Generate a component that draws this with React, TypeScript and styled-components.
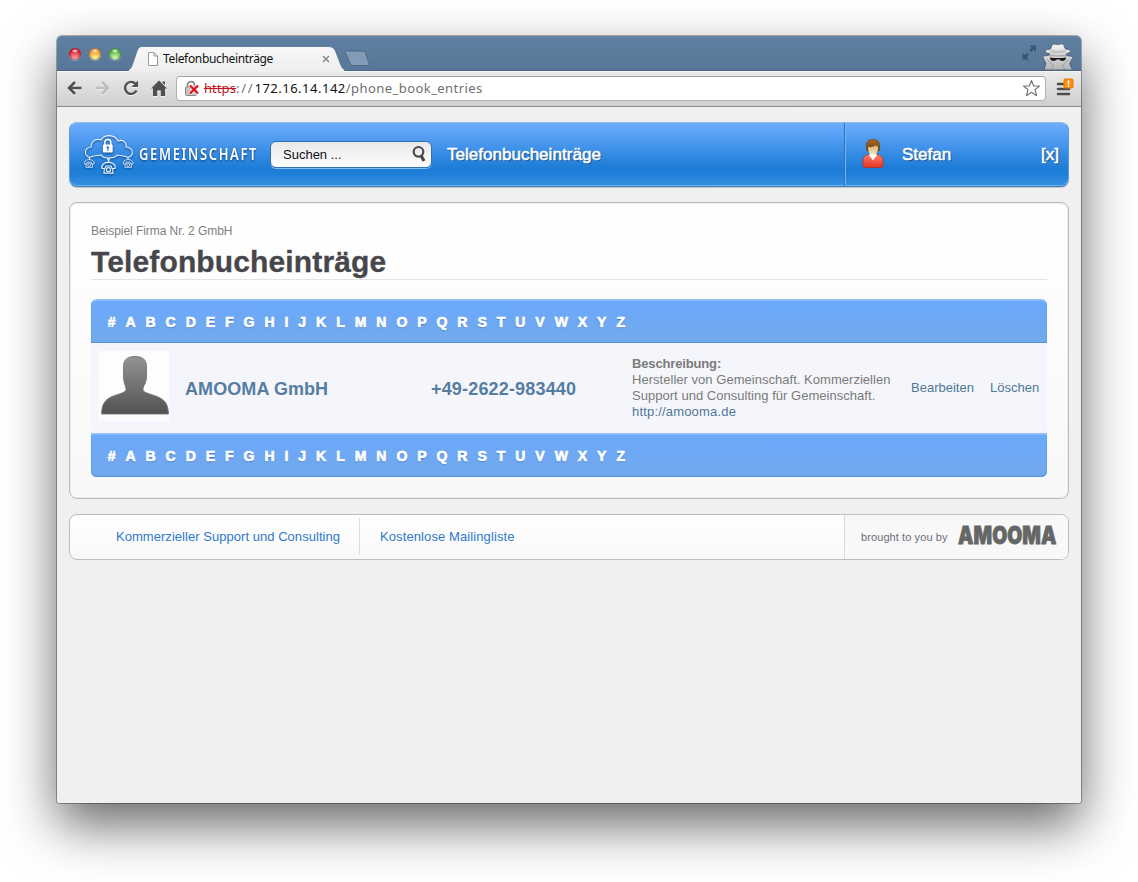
import React from 'react';
import styled, { createGlobalStyle } from 'styled-components';

const Global = createGlobalStyle`
  * { box-sizing: border-box; }
  html, body { margin: 0; height: 882px; overflow: hidden; background: #fff; }
  body { font-family: "Liberation Sans", Arial, sans-serif; }
  svg { flex-shrink: 0; }
`;

const Desktop = styled.div`
  width: 1138px;
  height: 882px;
  padding: 36px 57px 79px 57px;
  overflow: hidden;
`;

const Window = styled.div`
  width: 1024px;
  height: 767px;
  display: flex;
  flex-direction: column;
  border-radius: 5px 5px 3px 3px;
  box-shadow: 0 0 0 1px rgba(0, 0, 0, 0.3), 0 22px 52px 0 rgba(0, 0, 0, 0.6);
`;

const TabStrip = styled.div`
  height: 35px;
  display: flex;
  align-items: flex-end;
  background: linear-gradient(#5f80a3, #587798);
  border-radius: 5px 5px 0 0;
  box-shadow: inset 0 1px 0 #6685a6;
  border-bottom: 1px solid #4b6783;
`;

const Lights = styled.div`
  display: flex;
  gap: 8px;
  padding: 0 0 10px 12px;
  width: 74px;
`;

const Light = styled.span<{ $a: string; $b: string }>`
  width: 12px;
  height: 12px;
  border-radius: 50%;
  background:
    radial-gradient(ellipse 3.5px 2px at 50% 24%, rgba(255, 255, 255, 0.95), rgba(255, 255, 255, 0)),
    radial-gradient(circle at 50% 88%, ${p => p.$a} 12%, ${p => p.$b} 65%);
  box-shadow: inset 0 0 1.5px rgba(40, 20, 20, 0.85), 0 1px 1px rgba(255, 255, 255, 0.3);
`;

const Tab = styled.div`
  position: relative;
  width: 220px;
  height: 25px;
  margin-bottom: -1px;
  display: flex;
  align-items: center;
  padding: 0 21px 0 16px;
  > svg { position: relative; }
  > svg.shape { position: absolute; left: 0; top: 0; overflow: visible; }
`;

const TabLabel = styled.span`
  position: relative;
  flex: 1;
  margin-left: 4px;
  font: 12px/16px "Noto Sans", sans-serif;
  letter-spacing: -0.34px;
  color: #111;
  white-space: nowrap;
`;

const TabEnd = styled.div`
  flex: 1;
  display: flex;
  justify-content: space-between;
  align-items: flex-end;
`;

const NewTab = styled.svg`
  margin-left: -8px;
`;

const Corner = styled.div`
  display: flex;
  align-items: flex-end;
  gap: 4px;
  padding-right: 7px;
`;

const Expand = styled.svg`
  margin-bottom: 8px;
`;

const Toolbar = styled.div`
  height: 36px;
  display: flex;
  align-items: center;
  padding: 0 7px 1px 9px;
  background: linear-gradient(#ebebeb, #cfcfcf);
  box-shadow: inset 0 1px 0 #f6f6f6;
  border-bottom: 1px solid #8b8b8b;
`;

const Nav = styled.div`
  display: flex;
  gap: 10px;
  width: 110px;
  svg { display: block; filter: drop-shadow(0 1px 0 rgba(255, 255, 255, 0.7)); }
`;

const Omnibox = styled.div`
  width: 871px;
  height: 25px;
  display: flex;
  align-items: center;
  padding: 0 4px 0 7px;
  background: #fff;
  border: 1px solid #b1b1b1;
  border-top-color: #a5a5a5;
  border-radius: 4px;
  margin-right: 10px;
`;

const Url = styled.div`
  flex: 1;
  display: flex;
  margin-left: 4px;
  font: 13px/18px "Noto Sans", sans-serif;
  color: #6f6f6f;
  white-space: nowrap;
`;

const UrlPart = styled.span<{ $color?: string; $strike?: boolean; $space: number }>`
  color: ${p => p.$color || 'inherit'};
  letter-spacing: ${p => p.$space}px;
  text-decoration: ${p => (p.$strike ? 'line-through' : 'none')};
`;

const Page = styled.main`
  flex: 1;
  padding: 15px 12px;
  display: flex;
  flex-direction: column;
  gap: 15px;
  border-radius: 0 0 3px 3px;
  background:
    repeating-linear-gradient(135deg, rgba(225, 230, 228, 0) 0 4.66px, rgba(222, 228, 226, 0.28) 4.66px 5.66px),
    #f1f1f1;
`;

const Header = styled.header`
  height: 65px;
  display: flex;
  align-items: stretch;
  border-radius: 8px;
  border: 1px solid #5b9ee0;
  border-top-color: #8fbcea;
  border-bottom-color: #3b7fc0;
  background: linear-gradient(#6eadfe 0%, #4b98ee 30%, #1c7cd6 72%, #1f80d9 82%, #3790e0 100%);
  box-shadow: inset 0 -1px 0 #6db1ee, 0 1px 1px rgba(0, 0, 0, 0.18);
  color: #fff;
`;

const HeaderMain = styled.div`
  flex: 1;
  display: flex;
  align-items: center;
  padding-left: 14px;
`;

const Brand = styled.div`
  width: 186px;
  display: flex;
  align-items: center;
  filter: drop-shadow(0 1px 1px rgba(0, 40, 90, 0.75));
`;

const BrandName = styled.span`
  margin: -2px 0 0 5px;
  font: 600 16.5px/20px "Noto Sans", sans-serif;
  letter-spacing: 2.15px;
  white-space: nowrap;
  transform: scaleX(0.783);
  transform-origin: left;
`;

const Search = styled.div`
  width: 162px;
  height: 27px;
  margin-top: -1px;
  display: flex;
  align-items: center;
  justify-content: space-between;
  padding: 0 4px 0 12px;
  border-radius: 6px;
  border: 1px solid #3071b5;
  background: linear-gradient(#e9e9eb, #fdfdfd);
  box-shadow: 0 1px 0 rgba(160, 205, 250, 0.8);
  font-size: 13px;
  color: #111;
`;

const HeaderText = styled.span`
  font-size: 17px;
  line-height: 20px;
  -webkit-text-stroke: 0.55px #fff;
  text-shadow: 1px 1px 1px rgba(0, 20, 60, 0.6);
`;

const HeaderTitle = styled(HeaderText)`
  margin-left: 15px;
  letter-spacing: 0.04px;
`;

const UserPanel = styled.div`
  width: 223px;
  display: flex;
  align-items: center;
  padding: 0 9px 0 16px;
  border-left: 1px solid #74b2f0;
  box-shadow: -1px 0 0 #2b74c0;
`;

const UserIcon = styled.svg`
  margin: -1px 0 0 -1px;
`;

const UserName = styled(HeaderText)`
  flex: 1;
  margin-left: 17px;
`;

const Card = styled.section`
  height: 297px;
  padding: 20px 21px 0 21px;
  border: 1px solid #bcbcc7;
  border-radius: 8px;
  background: linear-gradient(#fff, #f8f8f8);
  box-shadow: inset 0 0 0 1px #ececf0;
`;

const Company = styled.div`
  font-size: 12px;
  line-height: 16px;
  letter-spacing: -0.05px;
  color: #7e7e82;
`;

const Title = styled.h1`
  margin: 0 0 19px;
  height: 41px;
  padding-top: 5px;
  border-bottom: 1px solid #e3e3e6;
  font-size: 30px;
  line-height: 36px;
  letter-spacing: 0.13px;
  font-weight: bold;
  color: #47474b;
  -webkit-text-stroke: 0.3px #47474b;
`;

const LetterBar = styled.nav<{ $last?: boolean }>`
  height: 44px;
  display: flex;
  align-items: center;
  gap: 9.96px;
  padding: 1px 17px 0 16.7px;
  border-radius: ${p => (p.$last ? '0 0 6px 6px' : '6px 6px 0 0')};
  background: linear-gradient(#6aa9fc, #73a8eb);
  border-top: 1px solid #96c2f4;
  box-shadow: inset 0 1px 0 #8abbf8, inset 0 -1px 0 #5391d4, inset 1px 0 0 #61a0ea, inset -1px 0 0 #61a0ea;
  font-size: 14px;
  font-weight: bold;
  color: #fff;
  -webkit-text-stroke: 0.7px #fff;
  text-shadow: 0 1px 1px rgba(20, 70, 140, 0.6);
`;

const Entry = styled.div`
  height: 90px;
  display: grid;
  grid-template-columns: 94px 246px 201px 279px 79px 1fr;
  align-items: center;
  background: #f5f6fb;
  font-size: 13px;
  line-height: 16px;
  color: #7a7a7a;
`;

const Avatar = styled.div`
  width: 70px;
  height: 70px;
  margin-left: 8px;
  margin-top: -4px;
  background: #fdfdfd;
`;

const Strong = styled.span<{ $space: number }>`
  padding-top: 1px;
  font-size: 18px;
  line-height: 22px;
  font-weight: bold;
  letter-spacing: ${p => p.$space}px;
  color: #557da3;
`;

const Description = styled.div`
  padding-bottom: 1px;
  letter-spacing: 0.03px;
  white-space: nowrap;
`;

const Heading = styled.b`
  letter-spacing: -0.15px;
`;

const Link = styled.a`
  color: #507697;
`;

const Website = styled(Link)`
  letter-spacing: 0.18px;
`;

const Footer = styled.footer`
  height: 46px;
  display: flex;
  align-items: stretch;
  border: 1px solid #bcbcc7;
  border-radius: 8px;
  background: linear-gradient(#fff, #f8f8f8);
`;

const FooterLinks = styled.div`
  flex: 1;
  display: flex;
  padding: 3px 0 4px 46px;
`;

const FooterLink = styled.a`
  display: flex;
  align-items: center;
  padding-right: 20px;
  margin-right: 20px;
  font-size: 13px;
  letter-spacing: 0.04px;
  color: #2f79cc;
  & + & { padding: 0; letter-spacing: 0.1px; }
  &:first-child { padding-right: 19px; border-right: 1px solid #dddde0; }
`;

const Sponsor = styled.div`
  width: 224px;
  display: flex;
  align-items: center;
  padding-left: 16px;
  border-left: 1px solid #dadade;
  border-radius: 0 7px 7px 0;
  background: #f8f8f8;
  font-size: 11px;
  letter-spacing: 0.09px;
  color: #6d6d7c;
  svg { margin-left: 9px; overflow: visible; }
`;

const Phone = ({ x, y, s }: { x: number; y: number; s: number }) => (
  <g transform={`translate(${x} ${y}) scale(${s})`} fill="none" stroke="#e6f2ff" strokeWidth="1.1">
    <path d="M-6.500 0C-7.500 -4.500 -3 -6 0 -6S7.500 -4.500 6.500 0L3.500 0 2.500 -2.500H-2.500L-3.500 0Z" />
    <path d="M-4 0L-4.500 4.500H4.500L4 0" />
    <circle cx="0" cy="1.200" r="2" />
  </g>
);

const CloudLogo = () => (
  <svg width="50" height="42" viewBox="0 0 50 42">
    <path d="M5.500 23.500C-1 20.500 1 13.500 7 13C7 6.500 13 4 17 6C20 0 31 0 34 7C39 5 43 8.500 42 13C49.500 13.500 50.500 21 44 23.500M5.500 23.500C10 21 14 22 17 21C19 24 22 24 24.500 24C27 24 31 24 33 21C36 22 40 21 44 23.500M5.500 23.500V26M44 23.500V26M23.500 24L24.500 28L25.500 24" fill="none" stroke="#e6f2ff" strokeWidth="1.1" />
    <path d="M20.800 11.500V9C20.800 4.300 26.800 4.300 26.800 9V11.500" fill="none" stroke="#fff" strokeWidth="1.6" />
    <rect x="18.900" y="10.500" width="9.800" height="8" rx="1" fill="#fff" />
    <path d="M23.800 12V17M22.500 13.500H25.200" stroke="#3e8adc" strokeWidth="1.3" />
    <Phone x={5.2} y={30} s={0.74} />
    <Phone x={44.200} y={30} s={0.74} />
    <Phone x={24.500} y={34.500} s={1.02} />
  </svg>
);

const LETTERS = '#ABCDEFGHIJKLMNOPQRSTUVWXYZ'.split('');

const Letters = ({ last }: { last?: boolean }) => (
  <LetterBar $last={last}>
    {LETTERS.map(l => <span key={l}>{l}</span>)}
  </LetterBar>
);

export default function App() {
  return (
    <Desktop>
      <Global />
      <Window>
        <TabStrip>
          <Lights>
            <Light $a="#ff9a9a" $b="#dc1c30" />
            <Light $a="#ffef8a" $b="#ea9a2c" />
            <Light $a="#c8f8a0" $b="#55b048" />
          </Lights>
          <Tab>
            <svg className="shape" width="220" height="25" viewBox="0 0 220 25">
              <defs>
                <linearGradient id="tab" x1="0" y1="0" x2="0" y2="1">
                  <stop offset="0" stopColor="#f8f8f8" />
                  <stop offset="1" stopColor="#eeeeee" />
                </linearGradient>
              </defs>
              <path d="M-6 24.500C0 24 0 22 2 17L6 5C7.500 1.500 9 0.500 12 0.500H197C201 0.500 203 2 204.500 5L209 17C211 22 212 24 217 24.500Z" fill="url(#tab)" stroke="#4e6b89" strokeWidth="0.7" />
              <rect x="-2" y="24" width="215" height="2" fill="#eeeeee" />
            </svg>
            <svg width="12" height="14" viewBox="0 0 12 14">
              <path d="M1.500 0.500H7L10.500 4V13.500H1.500ZM7 0.500V4H10.500" fill="#fff" stroke="#999" />
            </svg>
            <TabLabel>Telefonbucheinträge</TabLabel>
            <svg width="8" height="8" viewBox="0 0 8 8">
              <path d="M1 1L7 7M7 1L1 7" stroke="#888" strokeWidth="1.5" />
            </svg>
          </Tab>
          <TabEnd>
            <NewTab width="28" height="24" viewBox="0 0 28 24">
              <path d="M3.500 5H19C21 5 22 6 22.500 7.500L26 17C26.500 19 26 19.500 24.500 19.500H11C8.500 19.500 7.500 18.500 7 17L2.500 7C2 5.500 2.500 5 3.500 5Z" fill="#829bb6" stroke="#4c6987" />
            </NewTab>
            <Corner>
              <Expand width="16" height="18" viewBox="0 0 16 18">
                <path d="M7.500 1.500H14V8L11.700 5.800 9.200 8 7 6 9.700 3.800ZM0.500 9L2.800 11.200 5 9 7 11 4.800 13.200 7 15.500H0.500Z" fill="#3d5670" />
              </Expand>
              <svg width="32" height="27" viewBox="0 0 32 27">
                <defs>
                  <linearGradient id="coat" x1="0" y1="0" x2="0" y2="1"><stop offset="0" stopColor="#f4f4f4" /><stop offset="1" stopColor="#b4b4b4" /></linearGradient>
                </defs>
                <path d="M2 27L4 20.500 0.500 13.500C4 12 6 13 7.500 12V10.500C5 10.500 3 9.500 3 8C4 6 7 6.500 8.500 6L10 2C12 0 14 1.500 16 1.500S20 0 21.500 1.500L23.500 6C27 6.500 29 7 28.500 9L24 11V12.500L31.500 13.500 27.500 20.500 30.500 27Z" fill="url(#coat)" stroke="#45566a" strokeWidth="0.8" />
                <path d="M9 6.500C13 8 20 8 23.500 6.500L24 9C19 11 13 11 8 9Z" fill="#c4c4c4" />
                <path d="M7.500 11C12 12.500 20 12.500 24.500 11V13.500H7.500Z" fill="#aaa" />
                <path d="M8 14.500C12 15.300 20 15.300 24 14.500C24.500 18 19 19 17.300 16.500H14.700C13 19 7.500 18 8 14.500Z" fill="#1c1c1c" />
                <path d="M5 16L11.500 23 9 26M27 16L20.500 23 23 26" stroke="#999" fill="none" />
              </svg>
            </Corner>
          </TabEnd>
        </TabStrip>
        <Toolbar>
          <Nav>
            <svg width="18" height="18" viewBox="0 0 18 18"><path d="M15.500 9H3.500M9 3L3 9L9 15" fill="none" stroke="#505050" strokeWidth="2.5" /></svg>
            <svg width="18" height="18" viewBox="0 0 18 18"><path d="M2 9H13.500M8 3L14 9L8 15" fill="none" stroke="#bdbdbd" strokeWidth="2.5" /></svg>
            <svg width="18" height="18" viewBox="0 0 18 18"><path d="M14.500 11.500A6 6 0 1 1 13.500 4.800" fill="none" stroke="#505050" strokeWidth="2.400" /><path d="M16 1.500V8H9.500Z" fill="#505050" /></svg>
            <svg width="18" height="18" viewBox="0 0 18 18"><path d="M9 1.500L17 9.500H15V17H10.800V11.500H7.200V17H3V9.500H1ZM12.500 2.500H15V6L12.500 4Z" fill="#505050" /></svg>
          </Nav>
          <Omnibox>
            <svg width="16" height="17" viewBox="0 0 16 17">
              <path d="M3.500 8V5C3.500 0.500 10.500 0.500 10.500 5V8" fill="none" stroke="#8a8a8a" strokeWidth="1.600" />
              <rect x="1.500" y="7" width="11" height="8.500" rx="1" fill="#c4c4c4" stroke="#8a8a8a" />
              <path d="M6 5.500L14 13.500M14 5.500L6 13.500" stroke="#fff" strokeWidth="3.800" />
              <path d="M6 5.500L14 13.500M14 5.500L6 13.500" stroke="#e0101c" strokeWidth="2.400" />
            </svg>
            <Url>
              <UrlPart $color="#c4141c" $strike $space={0.1}>https</UrlPart>
              <UrlPart $space={1.75}>://</UrlPart>
              <UrlPart $color="#111" $space={0.5}>172.16.14.142</UrlPart>
              <UrlPart $space={0.44}>/phone_book_entries</UrlPart>
            </Url>
            <svg width="19" height="19" viewBox="0 0 19 19">
              <path d="M9.500 1.500L11.700 7H17.500L13 10.700 14.600 16.700 9.500 13.300 4.400 16.700 6 10.700 1.500 7H7.300Z" fill="#fff" stroke="#777" strokeWidth="1.200" strokeLinejoin="round" />
            </svg>
          </Omnibox>
          <svg width="18" height="20" viewBox="0 0 18 20">
            <path d="M2 6H13M2 11H13M2 16H13" stroke="#4d4d4d" strokeWidth="2.600" strokeLinecap="round" />
            <rect x="8" y="1" width="9" height="9" rx="1" fill="#f88d12" stroke="#f07c00" />
            <path d="M12.500 2.500V6.500M12.500 7.500V9" stroke="#fff" strokeWidth="1.500" />
          </svg>
        </Toolbar>
        <Page>
          <Header>
            <HeaderMain>
              <Brand>
                <CloudLogo />
                <BrandName>GEMEINSCHAFT</BrandName>
              </Brand>
              <Search>
                Suchen ...
                <svg width="15" height="18" viewBox="0 0 15 18">
                  <circle cx="6.500" cy="6.800" r="4.800" fill="none" stroke="#4a4a4a" strokeWidth="2.200" />
                  <path d="M9 10.500L12 16" stroke="#4a4a4a" strokeWidth="3.200" />
                </svg>
              </Search>
              <HeaderTitle>Telefonbucheinträge</HeaderTitle>
            </HeaderMain>
            <UserPanel>
              <UserIcon width="24" height="32" viewBox="0 0 24 32">
                <defs>
                  <linearGradient id="shirt" x1="0" y1="0" x2="0" y2="1"><stop offset="0" stopColor="#ff7d6c" /><stop offset="1" stopColor="#e33424" /></linearGradient>
                  <linearGradient id="hair" x1="0" y1="0" x2="0" y2="1"><stop offset="0" stopColor="#aa6a24" /><stop offset="1" stopColor="#6b3d10" /></linearGradient>
                  <linearGradient id="skin" x1="0" y1="0" x2="0" y2="1"><stop offset="0" stopColor="#d9b479" /><stop offset="1" stopColor="#fbe7b8" /></linearGradient>
                </defs>
                <path d="M2 27V22.500C2 18.500 5 17 8 16.500H16C19 17 22 18.500 22 22.500V27C22 29 21 29.500 19 29.500H5C3 29.500 2 29 2 27Z" fill="url(#shirt)" stroke="#b82a1c" strokeWidth="0.700" />
                <path d="M8 17L12 22.500L16 17L14 14H10Z" fill="#fff" />
                <path d="M6 13C4.500 6 5.500 1.500 12 1.500S19.500 6 18 13Z" fill="url(#hair)" stroke="#70440f" strokeWidth="0.700" />
                <path d="M7 9C11 9.500 13 8.500 15 7.500L17 9C17.500 13 15 17 12 17S7 14 7 9Z" fill="url(#skin)" />
              </UserIcon>
              <UserName>Stefan</UserName>
              <HeaderText>[x]</HeaderText>
            </UserPanel>
          </Header>
          <Card>
            <Company>Beispiel Firma Nr. 2 GmbH</Company>
            <Title>Telefonbucheinträge</Title>
            <Letters />
            <Entry>
              <Avatar>
                <svg width="70" height="70" viewBox="0 0 70 70">
                  <defs>
                    <linearGradient id="person" x1="0" y1="0" x2="0" y2="1"><stop offset="0" stopColor="#939393" /><stop offset="1" stopColor="#525252" /></linearGradient>
                  </defs>
                  <path d="M2.500 63C3 54 5 49 13 45.500C21 42.500 27 41.500 27 38.500C27 34.500 24.500 33 24.500 25V16C24.500 8 29 5.500 36 5.500S47.500 8 47.500 16V25C47.500 33 44 34.500 44 38.500C44 41.500 50 42.500 58 45.500C67 49 69 54 69.500 63Z" fill="url(#person)" stroke="#777" strokeWidth="0.900" />
                </svg>
              </Avatar>
              <Strong $space={0.08}>AMOOMA GmbH</Strong>
              <Strong $space={0.17}>+49-2622-983440</Strong>
              <Description>
                <Heading>Beschreibung:</Heading><br />
                Hersteller von Gemeinschaft. Kommerziellen<br />
                Support und Consulting für Gemeinschaft.<br />
                <Website>http://amooma.de</Website>
              </Description>
              <Link>Bearbeiten</Link>
              <Link>Löschen</Link>
            </Entry>
            <Letters last />
          </Card>
          <Footer>
            <FooterLinks>
              <FooterLink>Kommerzieller Support und Consulting</FooterLink>
              <FooterLink>Kostenlose Mailingliste</FooterLink>
            </FooterLinks>
            <Sponsor>
              brought to you by
              <svg width="100" height="30" viewBox="0 0 100 30">
                <text x="1" y="22.300" textLength="98.500" lengthAdjust="spacingAndGlyphs" fontFamily="Inter, sans-serif" fontWeight="900" fontSize="24" fill="#666" stroke="#666" strokeWidth="0.800">AMOOMA</text>
              </svg>
            </Sponsor>
          </Footer>
        </Page>
      </Window>
    </Desktop>
  );
}
